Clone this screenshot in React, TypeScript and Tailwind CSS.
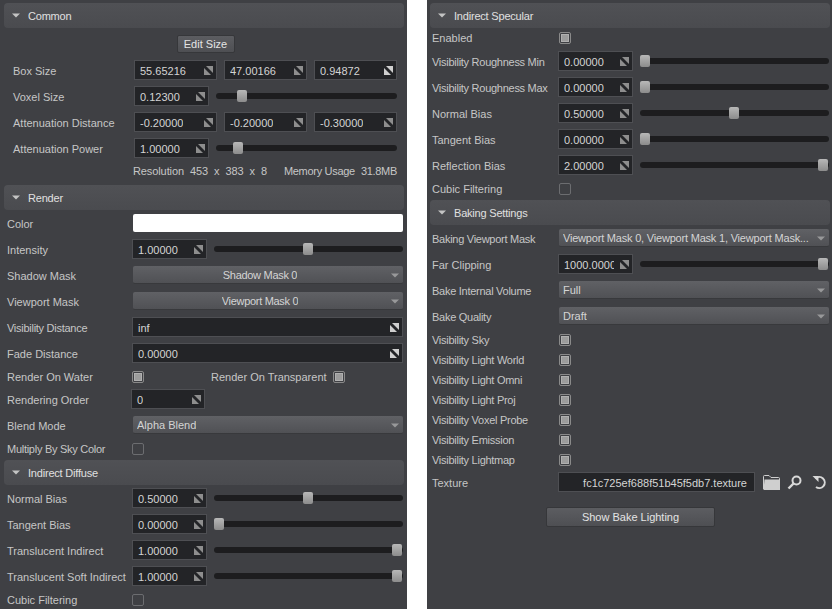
const FONT = "font-['Liberation_Sans',sans-serif] text-[11px] leading-none";

function Chevron({ className = "" }: { className?: string }) {
  return (
    <svg width="8" height="5" viewBox="0 0 8 5" className={`shrink-0 ${className}`}>
      <path d="M0 0.5 H8 L4 4.5 Z" fill="#c4c4c4" />
    </svg>
  );
}

function DragIcon({ bright = false }: { bright?: boolean }) {
  const c = bright ? "#cfcfcf" : "#8e8e8e";
  return (
    <svg width="9" height="9" viewBox="0 0 9 9" className="ml-[6px] shrink-0">
      <path d="M0 2 V9 H7 Z" fill={c} />
      <path d="M2 0 H9 V7 Z" fill={c} />
    </svg>
  );
}

function Header({ title, className = "" }: { title: string; className?: string }) {
  return (
    <div
      className={`flex h-[25px] items-center gap-[8px] rounded-[4px] bg-gradient-to-b from-[#505155] to-[#4a4b4f] pl-[8px] text-[#e0e0e0] ${className}`}
    >
      <Chevron />
      <span className="pt-[1px] tracking-[-0.2px]">{title}</span>
    </div>
  );
}

function Label({
  text,
  className = "w-[125px]",
  flat = false,
}: {
  text: string;
  className?: string;
  flat?: boolean;
}) {
  // these labels run narrower in the reference
  const tight = /Visibility|Multiply|Baking|Bake/.test(text) ? "tracking-[-0.27px]" : "";
  return (
    <span className={`shrink-0 whitespace-nowrap text-[#c6c6c6] ${flat ? "" : "pt-[2px]"} ${tight} ${className}`}>
      {text}
    </span>
  );
}

function Field({
  value,
  className = "w-[75px]",
  bright = false,
}: {
  value: string;
  className?: string;
  bright?: boolean;
}) {
  return (
    <div
      className={`flex h-[20px] shrink-0 items-center justify-between overflow-hidden border border-[#4e4f53] bg-[#232427] pl-[5px] pr-[3px] text-[#d4d4d4] ${className}`}
    >
      <span className="min-w-0 overflow-hidden whitespace-nowrap pt-[2px]">{value}</span>
      <DragIcon bright={bright} />
    </div>
  );
}

function Slider({ pos, className = "" }: { pos: number; className?: string }) {
  return (
    <div className={`relative h-[6px] min-w-0 grow rounded-[3px] bg-[#1d1d1f] ${className}`}>
      <div
        className="absolute top-[-3px] h-[12px] w-[10px] rounded-[2px] bg-gradient-to-b from-[#b8b8b8] to-[#8c8c8c]"
        style={{ left: `calc((100% - 11px) * ${pos})` }}
      />
    </div>
  );
}

function Select({
  value,
  center = false,
  className = "",
}: {
  value: string;
  center?: boolean;
  className?: string;
}) {
  return (
    <div
      className={`relative ml-[1px] flex h-[18px] min-w-0 grow items-center rounded-[2px] border-b border-[#38393c] bg-gradient-to-b from-[#606165] to-[#505155] pl-[4px] pr-[20px] text-[#d4d4d4] ${
        center ? "justify-center" : ""
      } ${className}`}
    >
      <span className="overflow-hidden whitespace-nowrap pt-[2px]">{value}</span>
      <Chevron className="absolute right-[4px] top-[7px] opacity-60" />
    </div>
  );
}

function Check({ on = false }: { on?: boolean }) {
  return (
    <div
      className={`flex h-[12px] w-[12px] shrink-0 items-center justify-center rounded-[2px] border ${
        on ? "border-[#8a8a8a]" : "border-[#6c6d70]"
      }`}
    >
      {on && <div className="h-[8px] w-[8px] border border-[#b0b0b0] bg-[#9c9c9c]" />}
    </div>
  );
}

function CheckRow({
  label,
  on,
  className = "",
  labelClass,
}: {
  label: string;
  on?: boolean;
  className?: string;
  labelClass?: string;
}) {
  return (
    <div className={`flex h-[12px] items-center ${className}`}>
      <Label text={label} className={labelClass} flat />
      <Check on={on} />
    </div>
  );
}

function Row({
  label,
  className = "",
  labelClass,
  children,
}: {
  label: string;
  className?: string;
  labelClass?: string;
  children: React.ReactNode;
}) {
  return (
    <div className={`flex h-[20px] items-center ${className}`}>
      <Label text={label} className={labelClass} />
      {children}
    </div>
  );
}

function SliderRow({
  label,
  value,
  pos,
  className = "",
  labelClass,
}: {
  label: string;
  value: string;
  pos: number;
  className?: string;
  labelClass?: string;
}) {
  return (
    <Row label={label} className={className} labelClass={labelClass}>
      <Field value={value} />
      <Slider pos={pos} className="ml-[7px]" />
    </Row>
  );
}

function LeftPanel() {
  return (
    <div className="w-[407px] shrink-0 bg-[#3f4044] pt-[3px]">
      <Header title="Common" className="mx-[4px] mr-[3px]" />
      <div className="pl-[13px] pr-[10px]">
        <div className="mt-[7px] flex justify-center pl-[1px]">
          <div className="flex h-[18px] w-[58px] items-center justify-center rounded-[2px] border border-[#36373a] bg-gradient-to-b from-[#5c5d61] to-[#4e4f53] text-[#e4e4e4]">
            Edit Size
          </div>
        </div>
        <div className="mt-[7px] flex h-[20px] items-center gap-[7px]">
          <Label text="Box Size" className="w-[114px]" />
          <Field value="55.65216" className="w-[83px]" />
          <Field value="47.00166" className="w-[83px]" />
          <Field value="0.94872" className="w-[83px]" bright />
        </div>
        <div className="mt-[6px] flex h-[20px] items-center">
          <Label text="Voxel Size" className="w-[121px]" />
          <Field value="0.12300" />
          <Slider pos={0.123} className="ml-[7px]" />
        </div>
        <div className="mt-[6px] flex h-[20px] items-center gap-[7px]">
          <Label text="Attenuation Distance" className="w-[114px]" />
          <Field value="-0.20000" className="w-[83px]" />
          <Field value="-0.20000" className="w-[83px]" />
          <Field value="-0.30000" className="w-[83px]" />
        </div>
        <div className="mt-[6px] flex h-[20px] items-center">
          <Label text="Attenuation Power" className="w-[121px]" />
          <Field value="1.00000" />
          <Slider pos={0.1} className="ml-[7px]" />
        </div>
        <div className="mt-[6px] flex h-[14px] items-center gap-[6px] whitespace-nowrap pl-[120px] tracking-[-0.1px] text-[#c6c6c6]">
          <span>Resolution</span>
          <span>453</span>
          <span>x</span>
          <span>383</span>
          <span>x</span>
          <span>8</span>
          <span className="ml-auto tracking-[-0.3px]">Memory Usage</span>
          <span className="tracking-[-0.3px]">31.8MB</span>
        </div>
      </div>
      <Header title="Render" className="mx-[4px] mr-[3px] mt-[7px]" />
      <div className="pl-[7px] pr-[4px]">
        <div className="mt-[4px] flex h-[18px] items-center">
          <Label text="Color" />
          <div className="ml-[1px] h-[18px] grow rounded-[2px] bg-white" />
        </div>
        <SliderRow label="Intensity" value="1.00000" pos={0.5} className="mt-[7px]" />
        <div className="mt-[7px] flex h-[18px] items-center">
          <Label text="Shadow Mask" />
          <Select value="Shadow Mask 0" center className="tracking-[-0.3px]" />
        </div>
        <div className="mt-[8px] flex h-[18px] items-center">
          <Label text="Viewport Mask" />
          <Select value="Viewport Mask 0" center className="tracking-[-0.3px]" />
        </div>
        <Row label="Visibility Distance" className="mt-[7px]">
          <Field value="inf" className="grow" bright />
        </Row>
        <Row label="Fade Distance" className="mt-[6px]">
          <Field value="0.00000" className="grow" bright />
        </Row>
        <div className="mt-[8px] flex h-[12px] items-center">
          <Label text="Render On Water" flat />
          <Check on />
          <span className="ml-[67px] w-[122px] whitespace-nowrap text-[#c6c6c6]">Render On Transparent</span>
          <Check on />
        </div>
        <Row label="Rendering Order" className="mt-[6px]" labelClass="w-[124px]">
          <Field value="0" className="w-[74px]" />
        </Row>
        <div className="mt-[7px] flex h-[18px] items-center">
          <Label text="Blend Mode" />
          <Select value="Alpha Blend" />
        </div>
        <CheckRow label="Multiply By Sky Color" className="mt-[9px]" />
      </div>
      <Header title="Indirect Diffuse" className="mx-[4px] mr-[3px] mt-[5px]" />
      <div className="pl-[7px] pr-[4px]">
        <SliderRow label="Normal Bias" value="0.50000" pos={0.5} className="mt-[3px]" />
        <SliderRow label="Tangent Bias" value="0.00000" pos={0} className="mt-[6px]" />
        <SliderRow label="Translucent Indirect" value="1.00000" pos={1} className="mt-[6px]" />
        <SliderRow label="Translucent Soft Indirect" value="1.00000" pos={1} className="mt-[6px]" />
        <CheckRow label="Cubic Filtering" className="mt-[8px]" />
      </div>
    </div>
  );
}

function RightPanel() {
  const visibility = ["Light World", "Light Omni", "Light Proj", "Voxel Probe", "Emission", "Lightmap"];
  const w = "w-[126px]";
  const cw = "w-[127px]";
  return (
    <div className="w-[405px] shrink-0 overflow-hidden bg-[#3f4044] pt-[3px]">
      <Header title="Indirect Specular" className="ml-[3px] mr-[2px]" />
      <div className="pl-[5px] pr-[3px]">
        <CheckRow label="Enabled" on className="mt-[4px]" labelClass={`${cw} pt-[1px]`} />
        <SliderRow label="Visibility Roughness Min" value="0.00000" pos={0} className="mt-[7px]" labelClass={w} />
        <SliderRow label="Visibility Roughness Max" value="0.00000" pos={0} className="mt-[6px]" labelClass={w} />
        <SliderRow label="Normal Bias" value="0.50000" pos={0.5} className="mt-[6px]" labelClass={w} />
        <SliderRow label="Tangent Bias" value="0.00000" pos={0} className="mt-[6px]" labelClass={w} />
        <SliderRow label="Reflection Bias" value="2.00000" pos={1} className="mt-[6px]" labelClass={w} />
        <CheckRow label="Cubic Filtering" className="mt-[8px]" labelClass={cw} />
      </div>
      <Header title="Baking Settings" className="ml-[3px] mr-[2px] mt-[5px]" />
      <div className="pl-[5px] pr-[3px]">
        <div className="mt-[4px] flex h-[18px] items-center">
          <Label text="Baking Viewport Mask" className={w} />
          <Select value="Viewport Mask 0, Viewport Mask 1, Viewport Mask..." className="tracking-[-0.2px]" />
        </div>
        <SliderRow label="Far Clipping" value="1000.0000" pos={1} className="mt-[7px]" labelClass={w} />
        <div className="mt-[7px] flex h-[18px] items-center">
          <Label text="Bake Internal Volume" className={w} />
          <Select value="Full" />
        </div>
        <div className="mt-[8px] flex h-[18px] items-center">
          <Label text="Bake Quality" className={w} />
          <Select value="Draft" />
        </div>
        <CheckRow label="Visibility Sky" on className="mt-[9px]" labelClass={cw} />
        {visibility.map((v) => (
          <CheckRow key={v} label={`Visibility ${v}`} on className="mt-[8px]" labelClass={cw} />
        ))}
        <Row label="Texture" className="mt-[6px]" labelClass={w}>
          <div className="flex h-[20px] w-[197px] shrink-0 items-center justify-end border border-[#4e4f53] bg-[#232427] pr-[7px] text-[#d4d4d4]">
            <span className="whitespace-nowrap pt-[2px]">fc1c725ef688f51b45f5db7.texture</span>
          </div>
          <svg width="17" height="15" viewBox="0 0 17 15" className="ml-[8px] shrink-0">
            <path d="M0.5 14 V1.5 Q0.5 0.5 1.5 0.5 H6 L8 2.5 H15.5 Q16.5 2.5 16.5 3.5 V5" fill="none" stroke="#cfcfcf" />
            <path d="M1.5 4.5 H17 V15 H0.5 Z" fill="#cfcfcf" />
          </svg>
          <svg width="15" height="15" viewBox="0 0 15 15" className="ml-[7px] shrink-0">
            <circle cx="9.5" cy="5.5" r="4" fill="none" stroke="#d8d8d8" strokeWidth="2" />
            <path d="M6.5 8.5 L1.5 13.5" stroke="#d8d8d8" strokeWidth="2.4" />
          </svg>
          <svg width="15" height="15" viewBox="0 0 15 15" className="ml-[10px] shrink-0">
            <path d="M3.5 3.5 A5.5 5.5 0 1 1 4 12" fill="none" stroke="#d8d8d8" strokeWidth="2" />
            <path d="M0.5 1 H6.5 V7 Z" fill="#d8d8d8" />
          </svg>
        </Row>
        <div className="mt-[15px] flex justify-center">
          <div className="flex h-[20px] w-[169px] items-center justify-center rounded-[2px] border border-[#36373a] bg-gradient-to-b from-[#5c5d61] to-[#4e4f53] text-[#e4e4e4]">
            Show Bake Lighting
          </div>
        </div>
      </div>
    </div>
  );
}

export default function App() {
  return (
    <div className={`flex h-[609px] w-[832px] gap-[20px] overflow-hidden bg-white ${FONT}`}>
      <LeftPanel />
      <RightPanel />
    </div>
  );
}
